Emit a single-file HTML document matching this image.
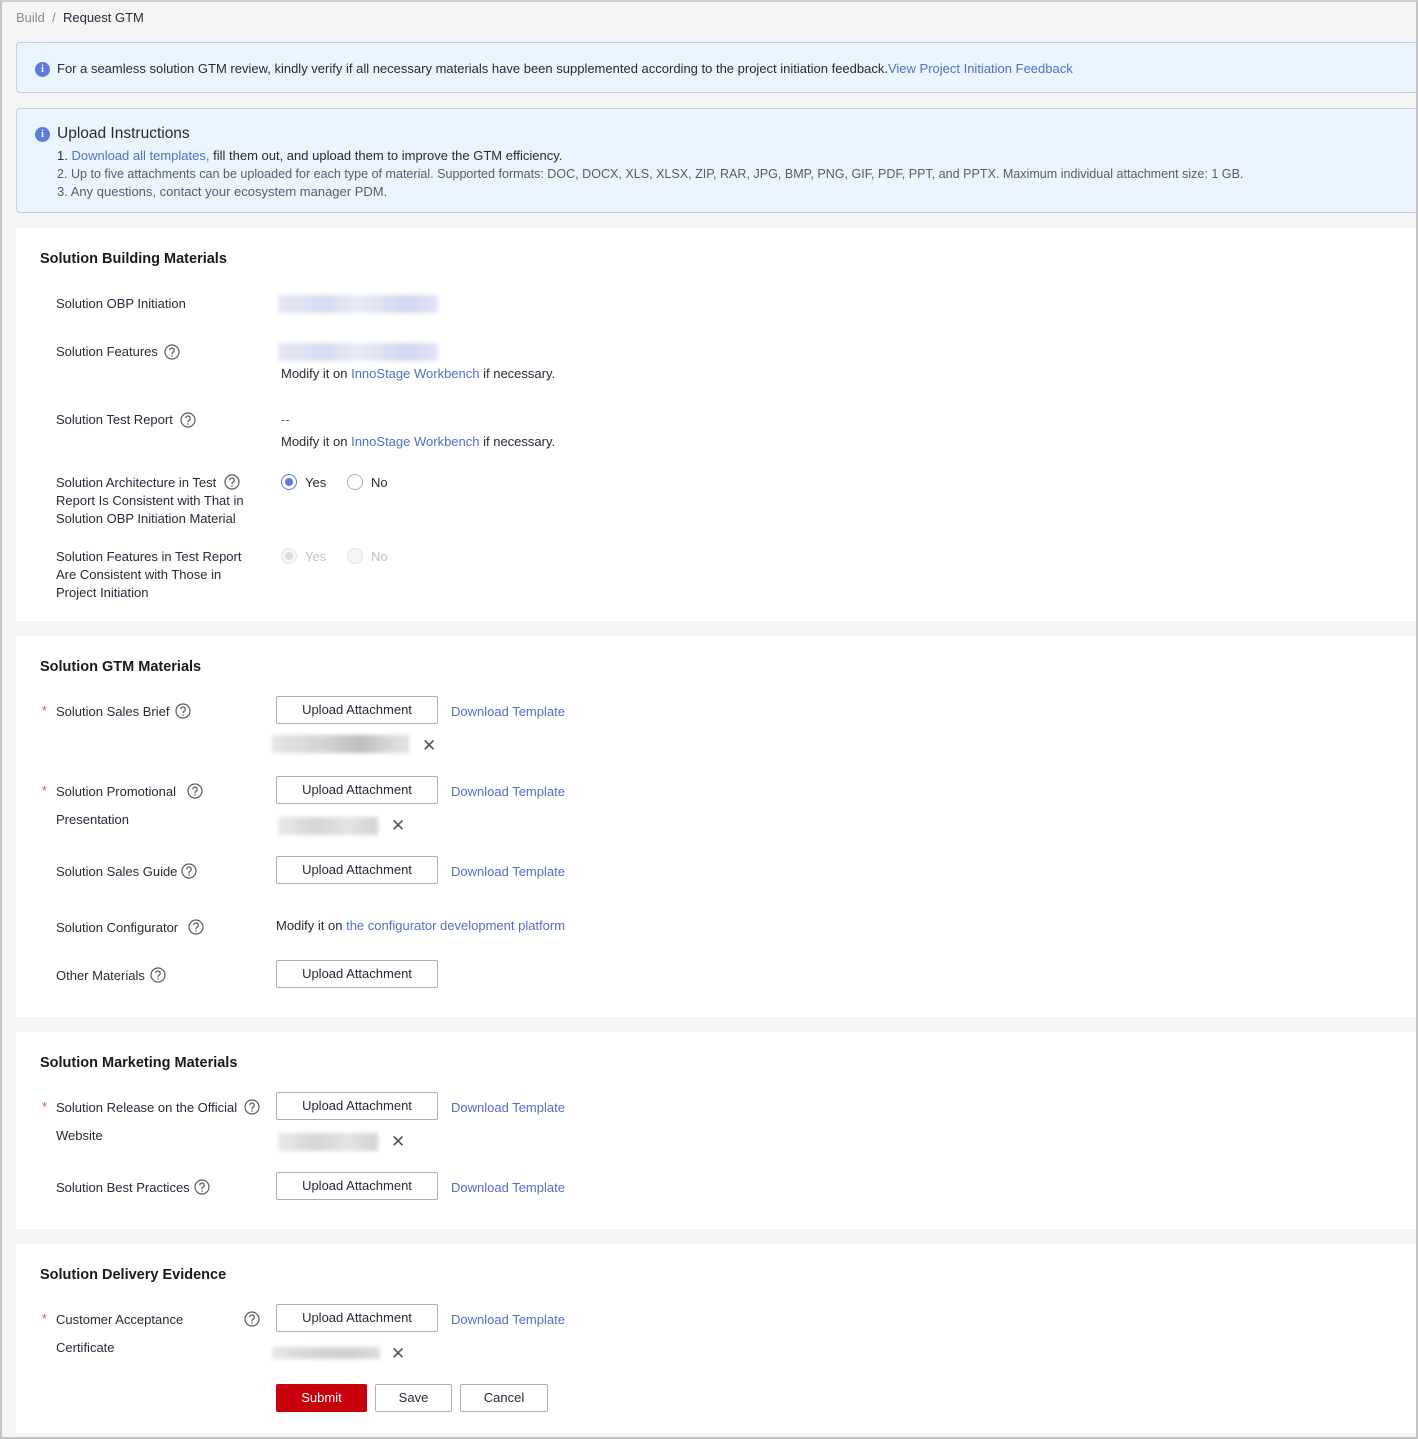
<!DOCTYPE html>
<html><head><meta charset="utf-8">
<style>
*{margin:0;padding:0;box-sizing:border-box}
html,body{width:1418px;height:1439px;overflow:hidden}
body{background:#f5f5f5;font-family:"Liberation Sans",sans-serif;font-size:13px;color:#252b3a;position:relative;border:2px solid #c4c4c4;border-top:2px solid #d0d0d0}
.a{position:absolute;white-space:nowrap;line-height:18px}
.card{position:absolute;left:14px;right:0;background:#fff}
.info{position:absolute;left:14px;right:0;background:#eaf5ff;border:1px solid #c2ccf5;border-right:none;border-radius:4px 0 0 4px}
.h{font-weight:bold;font-size:14.5px;color:#191919}
.lnk{color:#526ecc}
.btn{position:absolute;width:162px;height:28px;border:1px solid #adb0b8;border-radius:2px;background:#fff;text-align:center;line-height:26px;font-size:13px;color:#252b3a}
.star{color:#e0555f;position:absolute}
.q{position:absolute;width:16px;height:16px}
.blur{position:absolute;height:18px;filter:blur(2px)}
.x{position:absolute;font-size:17px;line-height:18px;color:#555}
.ico{position:absolute;width:15px;height:15px;border-radius:50%;background:#5e7ce0;color:#fff;font-size:10px;font-weight:bold;text-align:center;line-height:15px;font-family:"Liberation Serif",serif}
.radio{position:absolute;width:16px;height:16px;border-radius:50%;border:1px solid #adb0b8;background:#fff}
</style></head><body>
<svg width="0" height="0" style="position:absolute"><defs><symbol id="qq" viewBox="0 0 16 16"><circle cx="8" cy="8" r="7" fill="none" stroke="#5a5a5a" stroke-width="1.2"/><path d="M5.8 6.2a2.2 2.2 0 1 1 3.2 2c-.7.4-1 .8-1 1.6v.4" fill="none" stroke="#5a5a5a" stroke-width="1.2"/><circle cx="8" cy="12" r=".8" fill="#5a5a5a"/></symbol></defs></svg>

<div class="a" style="left:14px;top:7px;color:#8a8e99">Build &nbsp;/&nbsp; <span style="color:#252b3a">Request GTM</span></div>

<div class="info" style="top:40px;height:51px"></div>
<div class="ico" style="left:33px;top:60px">i</div>
<div class="a" style="left:55px;top:58px">For a seamless solution GTM review, kindly verify if all necessary materials have been supplemented according to the project initiation feedback.<span class="lnk">View Project Initiation Feedback</span></div>

<div class="info" style="top:106px;height:105px"></div>
<div class="ico" style="left:33px;top:125px">i</div>
<div class="a" style="left:55px;top:122px;font-size:15.5px;line-height:20px">Upload Instructions</div>
<div class="a" style="left:55px;top:145px">1. <span class="lnk">Download all templates,</span> fill them out, and upload them to improve the GTM efficiency.</div>
<div class="a" style="left:55px;top:163px;color:#575d6c;font-size:12.55px">2. Up to five attachments can be uploaded for each type of material. Supported formats: DOC, DOCX, XLS, XLSX, ZIP, RAR, JPG, BMP, PNG, GIF, PDF, PPT, and PPTX. Maximum individual attachment size: 1 GB.</div>
<div class="a" style="left:55px;top:181px;color:#575d6c">3. Any questions, contact your ecosystem manager PDM.</div>

<!-- card 1 -->
<div class="card" style="top:226px;height:393px"></div>
<div class="a h" style="left:38px;top:248px">Solution Building Materials</div>
<div class="a" style="left:54px;top:293px">Solution OBP Initiation</div>
<div class="blur" style="left:276px;top:293px;width:160px;background:linear-gradient(90deg,#e4e7f4,#d8dcf0 30%,#e8eaf6 50%,#d4d8ee 80%,#e0e3f2)"></div>
<div class="a" style="left:54px;top:341px">Solution Features</div>
<svg class="q" style="left:162px;top:342px"><use href="#qq"/></svg>
<div class="blur" style="left:276px;top:341px;width:160px;background:linear-gradient(90deg,#e4e7f4,#d8dcf0 30%,#e8eaf6 50%,#d4d8ee 80%,#e0e3f2)"></div>
<div class="a" style="left:279px;top:363px">Modify it on <span class="lnk">InnoStage Workbench</span> if necessary.</div>
<div class="a" style="left:54px;top:409px">Solution Test Report</div>
<svg class="q" style="left:178px;top:410px"><use href="#qq"/></svg>
<div class="a lnk" style="left:279px;top:409px">--</div>
<div class="a" style="left:279px;top:431px">Modify it on <span class="lnk">InnoStage Workbench</span> if necessary.</div>
<div class="a" style="left:54px;top:472px">Solution Architecture in Test</div>
<svg class="q" style="left:222px;top:472px"><use href="#qq"/></svg>
<div class="a" style="left:54px;top:490px">Report Is Consistent with That in</div>
<div class="a" style="left:54px;top:508px">Solution OBP Initiation Material</div>
<div class="radio" style="left:279px;top:472px;border-color:#5e7ce0"><div style="position:absolute;left:3px;top:3px;width:8px;height:8px;border-radius:50%;background:#5e7ce0"></div></div>
<div class="a" style="left:303px;top:472px">Yes</div>
<div class="radio" style="left:345px;top:472px"></div>
<div class="a" style="left:369px;top:472px">No</div>
<div class="a" style="left:54px;top:546px">Solution Features in Test Report</div>
<div class="a" style="left:54px;top:564px">Are Consistent with Those in</div>
<div class="a" style="left:54px;top:582px">Project Initiation</div>
<div class="radio" style="left:279px;top:546px;border-color:#e3e3e3;background:#f5f5f5"><div style="position:absolute;left:3px;top:3px;width:8px;height:8px;border-radius:50%;background:#dcdcdc"></div></div>
<div class="a" style="left:303px;top:546px;color:#c0c0c0">Yes</div>
<div class="radio" style="left:345px;top:546px;border-color:#e3e3e3;background:#f5f5f5"></div>
<div class="a" style="left:369px;top:546px;color:#c0c0c0">No</div>

<!-- card 2 -->
<div class="card" style="top:634px;height:381px"></div>
<div class="a h" style="left:38px;top:656px">Solution GTM Materials</div>
<div class="star" style="left:40px;top:701px">*</div>
<div class="a" style="left:54px;top:701px">Solution Sales Brief</div>
<svg class="q" style="left:173px;top:701px"><use href="#qq"/></svg>
<div class="btn" style="left:274px;top:694px">Upload Attachment</div>
<div class="a lnk" style="left:449px;top:701px">Download Template</div>
<div class="blur" style="left:270px;top:733px;width:138px;background:linear-gradient(90deg,#e6e6e6,#d2d2d2 40%,#bdbdbd 65%,#d8d8d8 85%,#e6e6e6)"></div>
<div class="x" style="left:420px;top:735px">✕</div>
<div class="star" style="left:40px;top:781px">*</div>
<div class="a" style="left:54px;top:781px">Solution Promotional</div>
<svg class="q" style="left:185px;top:781px"><use href="#qq"/></svg>
<div class="a" style="left:54px;top:809px">Presentation</div>
<div class="btn" style="left:274px;top:774px">Upload Attachment</div>
<div class="a lnk" style="left:449px;top:781px">Download Template</div>
<div class="blur" style="left:276px;top:815px;width:100px;background:linear-gradient(90deg,#e8e8e8,#d6d6d6 40%,#e4e4e4 70%,#d2d2d2)"></div>
<div class="x" style="left:389px;top:815px">✕</div>
<div class="a" style="left:54px;top:861px">Solution Sales Guide</div>
<svg class="q" style="left:179px;top:861px"><use href="#qq"/></svg>
<div class="btn" style="left:274px;top:854px">Upload Attachment</div>
<div class="a lnk" style="left:449px;top:861px">Download Template</div>
<div class="a" style="left:54px;top:917px">Solution Configurator</div>
<svg class="q" style="left:186px;top:917px"><use href="#qq"/></svg>
<div class="a" style="left:274px;top:915px">Modify it on <span class="lnk">the configurator development platform</span></div>
<div class="a" style="left:54px;top:965px">Other Materials</div>
<svg class="q" style="left:148px;top:965px"><use href="#qq"/></svg>
<div class="btn" style="left:274px;top:958px">Upload Attachment</div>

<!-- card 3 -->
<div class="card" style="top:1030px;height:197px"></div>
<div class="a h" style="left:38px;top:1052px">Solution Marketing Materials</div>
<div class="star" style="left:40px;top:1097px">*</div>
<div class="a" style="left:54px;top:1097px">Solution Release on the Official</div>
<svg class="q" style="left:242px;top:1097px"><use href="#qq"/></svg>
<div class="a" style="left:54px;top:1125px">Website</div>
<div class="btn" style="left:274px;top:1090px">Upload Attachment</div>
<div class="a lnk" style="left:449px;top:1097px">Download Template</div>
<div class="blur" style="left:276px;top:1131px;width:100px;background:linear-gradient(90deg,#e8e8e8,#d6d6d6 40%,#e4e4e4 70%,#d2d2d2)"></div>
<div class="x" style="left:389px;top:1131px">✕</div>
<div class="a" style="left:54px;top:1177px">Solution Best Practices</div>
<svg class="q" style="left:192px;top:1177px"><use href="#qq"/></svg>
<div class="btn" style="left:274px;top:1170px">Upload Attachment</div>
<div class="a lnk" style="left:449px;top:1177px">Download Template</div>

<!-- card 4 -->
<div class="card" style="top:1242px;height:189px"></div>
<div class="a h" style="left:38px;top:1264px">Solution Delivery Evidence</div>
<div class="star" style="left:40px;top:1309px">*</div>
<div class="a" style="left:54px;top:1309px">Customer Acceptance</div>
<svg class="q" style="left:242px;top:1309px"><use href="#qq"/></svg>
<div class="a" style="left:54px;top:1337px">Certificate</div>
<div class="btn" style="left:274px;top:1302px">Upload Attachment</div>
<div class="a lnk" style="left:449px;top:1309px">Download Template</div>
<div class="blur" style="left:270px;top:1345px;width:108px;height:12px;background:linear-gradient(90deg,#e6e6e6,#d4d4d4 40%,#cfcfcf 70%,#dcdcdc)"></div>
<div class="x" style="left:389px;top:1343px">✕</div>
<div class="btn" style="left:274px;top:1382px;width:91px;background:#c7000b;border-color:#c7000b;color:#fff">Submit</div>
<div class="btn" style="left:373px;top:1382px;width:77px">Save</div>
<div class="btn" style="left:458px;top:1382px;width:88px">Cancel</div>
</body></html>
